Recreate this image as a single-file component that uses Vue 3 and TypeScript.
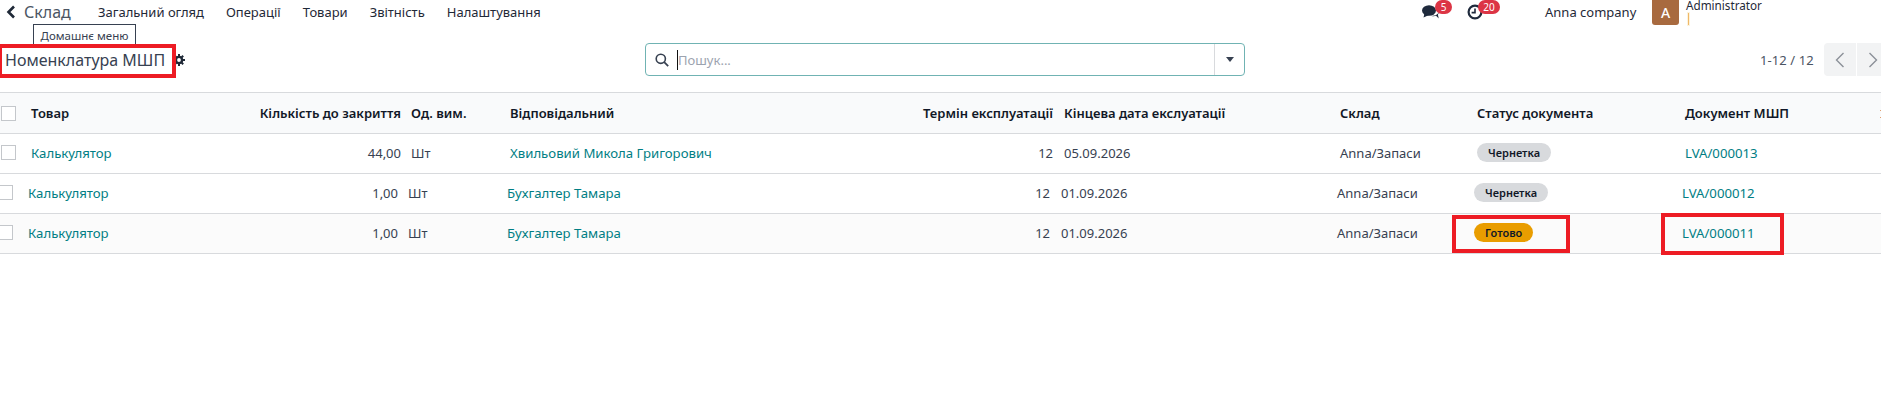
<script setup lang="ts">
interface Row {
  product: string; qty: string; uom: string; person: string; term: string; date: string;
  wh: string; status: string; done: boolean; doc: string; cls: string;
}
const nav: string[] = ['Загальний огляд', 'Операції', 'Товари', 'Звітність', 'Налаштування'];
const rows: Row[] = [
  { product: 'Калькулятор', qty: '44,00', uom: 'Шт', person: 'Хвильовий Микола Григорович', term: '12', date: '05.09.2026', wh: 'Anna/Запаси', status: 'Чернетка', done: false, doc: 'LVA/000013', cls: '' },
  { product: 'Калькулятор', qty: '1,00', uom: 'Шт', person: 'Бухгалтер Тамара', term: '12', date: '01.09.2026', wh: 'Anna/Запаси', status: 'Чернетка', done: false, doc: 'LVA/000012', cls: 'shift' },
  { product: 'Калькулятор', qty: '1,00', uom: 'Шт', person: 'Бухгалтер Тамара', term: '12', date: '01.09.2026', wh: 'Anna/Запаси', status: 'Готово', done: true, doc: 'LVA/000011', cls: 'shift tint' },
];
</script>

<template>
  <div class="page">
    <header class="top">
      <div class="nav-left">
        <svg class="back" width="12" height="14" viewBox="0 0 12 14"><path d="M9 1.5 3.5 7 9 12.5" fill="none" stroke="#1f2937" stroke-width="2.6" /></svg>
        <span class="app">Склад</span>
        <span v-for="n in nav" :key="n" class="nav-item">{{ n }}</span>
      </div>
      <div class="nav-right">
        <span class="sys chat">
          <svg width="18" height="15" viewBox="0 0 18 15"><ellipse cx="7" cy="5.5" rx="7" ry="5.2" fill="#1f2a3c" /><path d="M2.5 8.5 1.5 12.5 7 10Z" fill="#1f2a3c" /><path d="M9.5 11c2 .4 3.4.3 4.6-.2l2.6 2.6-.8-3.8c.8-.8 1-1.6.8-2.6-.4 2-3 3.8-7.2 4Z" fill="#1f2a3c" /></svg>
          <b class="badge b5">5</b>
        </span>
        <span class="sys clock">
          <svg width="16" height="16" viewBox="0 0 16 16"><circle cx="8" cy="8" r="6.4" fill="none" stroke="#1f2a3c" stroke-width="2.2" /><path d="M8 4.5V8.6H4.6" fill="none" stroke="#1f2a3c" stroke-width="1.6" /></svg>
          <b class="badge b20">20</b>
        </span>
        <span class="company">Anna company</span>
        <span class="avatar">A</span>
        <div class="user">
          <span>Administrator</span>
          <i class="user-line"></i>
        </div>
      </div>
    </header>

    <section class="control">
      <div class="title">
        <span>Номенклатура МШП</span>
        <svg class="gear" width="12" height="12" viewBox="0 0 12 12"><circle cx="6" cy="6" r="3.1" fill="none" stroke="#1f2937" stroke-width="2.4" /><path d="M6 0v2.4M6 9.6V12M0 6h2.4M9.6 6H12M1.8 1.8l1.7 1.7M8.5 8.5l1.7 1.7M1.8 10.2l1.7-1.7M8.5 3.5l1.7-1.7" stroke="#1f2937" stroke-width="2" /></svg>
      </div>
      <div class="search">
        <svg class="loupe" width="14" height="14" viewBox="0 0 14 14"><circle cx="5.8" cy="5.8" r="4.6" fill="none" stroke="#374151" stroke-width="1.6" /><path d="m9.2 9.2 4 4" stroke="#374151" stroke-width="1.8" /></svg>
        <i class="caret"></i>
        <span class="ph">Пошук...</span>
        <span class="drop"><i class="tri"></i></span>
      </div>
      <div class="pager">
        <span class="count">1-12 / 12</span>
        <span class="pbtn left"><svg width="10" height="16" viewBox="0 0 10 16"><path d="M8.5 1 1.5 8l7 7" fill="none" stroke="#8b9098" stroke-width="1.4" /></svg></span>
        <span class="pbtn"><svg width="10" height="16" viewBox="0 0 10 16"><path d="M1.5 1l7 7-7 7" fill="none" stroke="#8b9098" stroke-width="1.4" /></svg></span>
      </div>
    </section>

    <section class="table">
      <div class="row head">
        <span class="check"></span>
        <span>Товар</span>
        <span class="num">Кількість до закриття</span>
        <span class="uom">Од. вим.</span>
        <span>Відповідальний</span>
        <span class="num">Термін експлуатації</span>
        <span class="date">Кінцева дата екслуатації</span>
        <span>Склад</span>
        <span>Статус документа</span>
        <span>Документ МШП</span>
        <i class="stray s1"></i>
        <i class="stray s2"></i>
      </div>
      <div v-for="r in rows" :key="r.doc" class="row body" :class="r.cls">
        <span class="check"></span>
        <span class="link">{{ r.product }}</span>
        <span class="num">{{ r.qty }}</span>
        <span class="uom">{{ r.uom }}</span>
        <span class="link">{{ r.person }}</span>
        <span class="num">{{ r.term }}</span>
        <span class="date">{{ r.date }}</span>
        <span>{{ r.wh }}</span>
        <span><b class="pill" :class="{ done: r.done }">{{ r.status }}</b></span>
        <span class="link">{{ r.doc }}</span>
      </div>
    </section>

    <div class="tooltip">Домашнє меню</div>
    <i class="mark m1"></i>
    <i class="mark m2"></i>
    <i class="mark m3"></i>
  </div>
</template>

<style>
html, body { margin: 0; background: #fff; overflow: hidden; }
</style>

<style scoped>
.page {
  position: relative; width: 1881px; height: 407px; overflow: hidden; background: #fff;
  font-family: "Noto Sans", "Open Sans", sans-serif; font-size: 13px; color: #374151;
}
.top { display: flex; justify-content: space-between; height: 26px; }
.nav-left { display: flex; align-items: center; height: 24px; }
.back { margin-left: 5px; }
.app { margin-left: 7px; font-size: 16px; color: #4b5563; width: 74px; }
.nav-item { margin-right: 22px; color: #1f2937; }
.nav-right { display: flex; align-items: flex-start; margin-right: 121px; }
.sys { position: relative; display: block; height: 26px; }
.chat { width: 45px; }
.chat svg { margin-top: 5px; }
.clock { width: 78px; }
.clock svg { margin-top: 4px; }
.badge {
  position: absolute; top: 0; height: 14px; border-radius: 7px; background: #dc3545; color: #fff;
  font-size: 10px; font-weight: 400; line-height: 14px; text-align: center;
}
.b5 { left: 13px; width: 17px; }
.b20 { left: 11px; width: 22px; }
.company { margin-top: 3px; width: 107px; color: #1f2937; }
.avatar {
  width: 27px; height: 25px; border-radius: 0 0 3px 3px; background: #a86a3f; color: #fff;
  font-size: 14px; font-weight: 500; line-height: 25px; text-align: center;
}
.user { margin-left: 7px; font-size: 11.7px; line-height: 10px; color: #1f2937; display: flex; flex-direction: column; width: 74px; }
.user-line { display: block; width: 1px; height: 12px; margin: 3px 0 0 2px; background: #f0b868; box-shadow: 0 0 0 1px #fdf3dc; }
.control { display: grid; grid-template-columns: 645px 600px 1fr; height: 66px; align-items: start; padding-top: 17px; box-sizing: border-box; }
.title { display: flex; align-items: center; height: 33px; padding-left: 5px; font-size: 16px; color: #374151; }
.gear { margin-left: 8px; }
.search {
  position: relative; display: flex; align-items: center; height: 33px; box-sizing: border-box;
  border: 1px solid #70b3b3; border-radius: 4px; padding-left: 9px;
}
.caret { display: block; width: 1px; height: 20px; margin-left: 8px; background: #111; }
.ph { color: #9ca3af; font-size: 13px; }
.drop { margin-left: auto; width: 29px; height: 31px; border-left: 1px solid #d8dadd; display: flex; align-items: center; justify-content: center; }
.tri { border: 4px solid transparent; border-top: 5px solid #374151; border-bottom: 0; }
.pager { display: flex; align-items: center; height: 33px; padding-left: 515px; }
.count { width: 64px; color: #4b5563; letter-spacing: 0.1px; }
.pbtn { display: flex; align-items: center; justify-content: center; width: 32px; height: 33px; background: #f2f3f4; }
.pbtn.left { border-radius: 4px 0 0 4px; margin-right: 1px; }
.table { border-top: 1px solid #d8dadd; }
.row {
  position: relative; display: grid; height: 40px; align-items: center;
  grid-template-columns: 31px 200px 170px 109px 400px 143px 287px 137px 208px 1fr;
  border-bottom: 1px solid #d8dadd; box-sizing: border-box;
}
.head { background: #f9fafb; font-weight: 600; color: #111827; height: 41px; }
.body { padding-bottom: 2px; }
.body.shift > * { position: relative; left: -3px; }
.tint { background: #fbfbfb; }
.check { display: block; width: 13px; height: 13px; margin-left: 1px; border: 1px solid #c4c7cb; background: #fff; }
.num { text-align: right; white-space: nowrap; }
.uom { padding-left: 10px; }
.date { padding-left: 11px; white-space: nowrap; }
.link { color: #017e84; font-size: 13.2px; }
.pill {
  display: inline-block; height: 19px; margin-top: -4px; vertical-align: middle; padding: 0 11px; border-radius: 10px; background: #d8dadd; color: #111827;
  font-size: 11px; font-weight: 600; line-height: 19px;
}
.pill.done { background: #e99d00; }
.stray { position: absolute; right: 0; width: 1px; height: 1px; background: #e0a070; }
.s1 { top: 17px; }
.s2 { top: 24px; }
.tooltip {
  position: absolute; left: 33px; top: 24px; width: 103px; height: 24px; box-sizing: border-box;
  border: 1px solid #374151; background: #fff; font-size: 11.5px; line-height: 22px; text-align: center; color: #374151;
}
.mark { position: absolute; display: block; border: 4px solid #ed1c24; box-sizing: border-box; }
.m1 { left: -2px; top: 44px; width: 178px; height: 34px; }
.m2 { left: 1452px; top: 215px; width: 118px; height: 38px; }
.m3 { left: 1661px; top: 213px; width: 123px; height: 42px; }
</style>
